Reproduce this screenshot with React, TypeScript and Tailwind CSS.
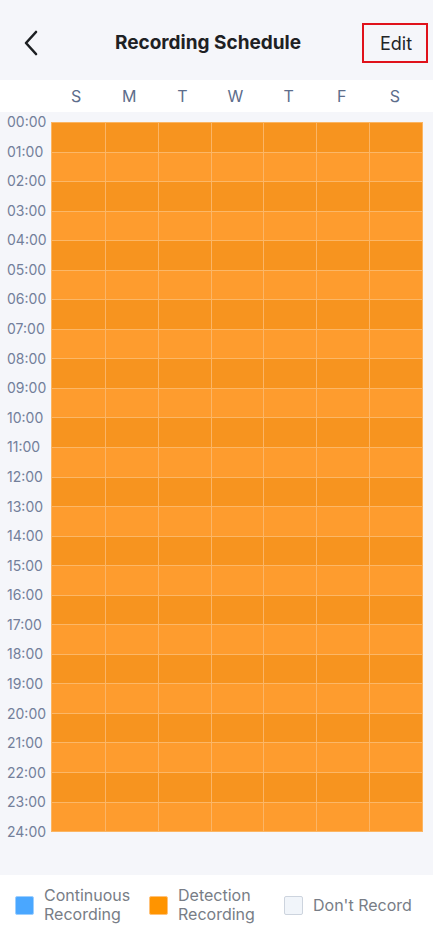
const days = ['S', 'M', 'T', 'W', 'T', 'F', 'S'];
const hours = Array.from({ length: 25 }, (_, i) => `${String(i).padStart(2, '0')}:00`);

function LegendSwatch({ color, border }: { color: string; border: string }) {
  return <div className={`w-[19px] h-[19px] rounded-[2px] border shrink-0 ${color} ${border}`} />;
}

export default function App() {
  return (
    <div className="w-[433px] h-[942px] flex flex-col bg-[#f5f6fa] overflow-hidden" style={{ fontFamily: 'Inter, "Noto Sans", sans-serif' }}>
      {/* Top bar */}
      <div className="h-[80px] shrink-0 flex items-center relative pt-[6px]">
        <button className="absolute left-[20px] top-[28px] w-[22px] h-[30px] flex items-center justify-center">
          <svg width="16" height="26" viewBox="0 0 16 26" fill="none">
            <path d="M13 2 L3 13 L13 24" stroke="#1c1f22" strokeWidth="2.6" strokeLinecap="round" strokeLinejoin="round" />
          </svg>
        </button>
        <h1 className="w-full text-center text-[19px] font-bold text-[#1e2124] pr-[17px]">Recording Schedule</h1>
        <div className="absolute left-[362px] top-[23px] w-[66px] h-[40px] border-2 border-[#e0121b] flex items-center justify-center">
          <span className="text-[18px] text-[#222528] pl-[2px]">Edit</span>
        </div>
      </div>

      {/* Day header */}
      <div className="h-[32px] shrink-0 bg-white flex">
        <div className="w-[51px] shrink-0" />
        <div className="w-[372px] grid grid-cols-7 items-center">
          {days.map((d, i) => (
            <span key={i} className="text-center text-[16px] text-[#5d6d8b] pr-[3px]">{d}</span>
          ))}
        </div>
      </div>

      {/* Schedule grid */}
      <div className="flex-1 flex">
        <div className="w-[51px] shrink-0 h-[730px] flex flex-col justify-between">
          {hours.map(h => (
            <span key={h} className="h-[20px] leading-[20px] text-[14px] text-[#737f9a] pl-[7px]">{h}</span>
          ))}
        </div>
        <div className="mt-[10px] w-[372px] h-[710px] border border-[#fbb562] flex flex-col">
          {Array.from({ length: 24 }, (_, r) => (
            <div key={r} className={`flex-1 grid grid-cols-7 ${r % 2 === 0 ? 'bg-[#f7941f]' : 'bg-[#fe9c2e]'} ${r > 0 ? 'border-t border-[#fcb766]' : ''}`}>
              {days.map((_, c) => (
                <div key={c} className={c > 0 ? 'border-l border-[#fbb566]' : ''} />
              ))}
            </div>
          ))}
        </div>
      </div>

      {/* Legend */}
      <div className="h-[67px] shrink-0 bg-white flex items-center pb-[7px] text-[16px] leading-[19px] text-[#787d86]">
        <div className="flex items-center gap-[10px] ml-[15px] w-[134px]">
          <LegendSwatch color="bg-[#4aa7ff]" border="border-[#9dcfff]" />
          <span>Continuous<br />Recording</span>
        </div>
        <div className="flex items-center gap-[10px] w-[135px]">
          <LegendSwatch color="bg-[#ff9400]" border="border-[#ffc27a]" />
          <span>Detection<br />Recording</span>
        </div>
        <div className="flex items-center gap-[10px]">
          <LegendSwatch color="bg-[#f1f5fa]" border="border-[#cdd4de]" />
          <span>Don't Record</span>
        </div>
      </div>
    </div>
  );
}
